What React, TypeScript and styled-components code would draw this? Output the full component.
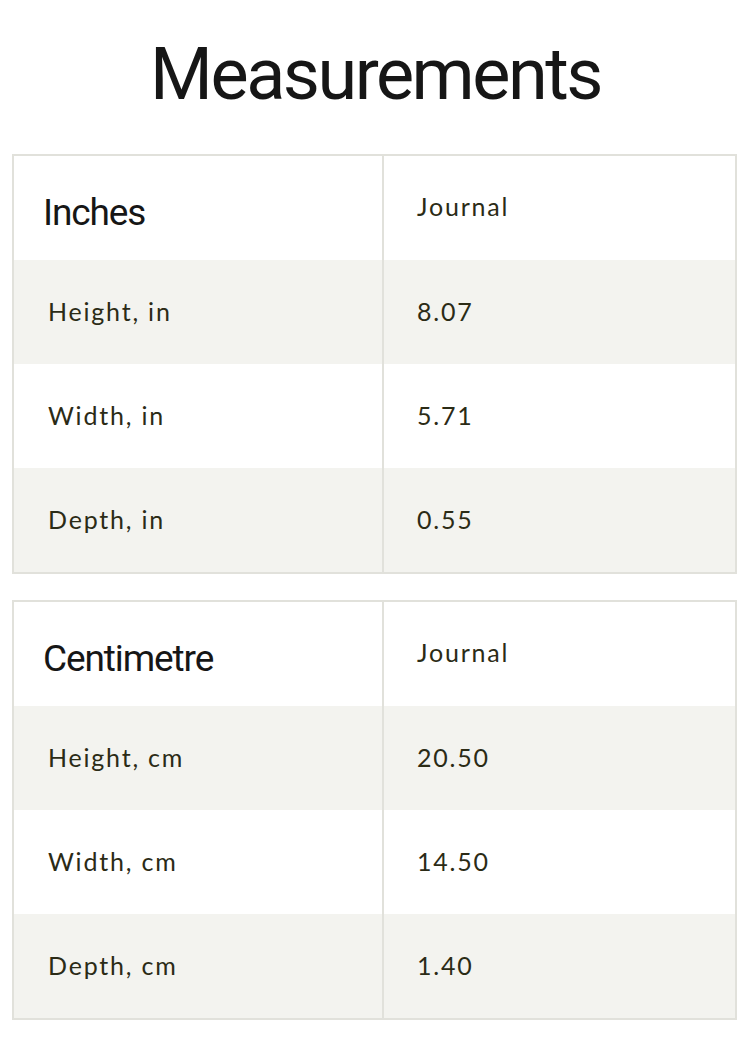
import React from "react";
import styled, { createGlobalStyle } from "styled-components";

const GlobalStyle = createGlobalStyle`
  html, body {
    margin: 0;
    padding: 0;
    background: #ffffff;
  }
  body {
    font-family: "Lato", "Liberation Sans", sans-serif;
  }
  * { box-sizing: border-box; }
`;

const Page = styled.div`
  width: 756px;
  height: 1040px;
  padding: 39px 19px 0 12px;
  display: flex;
  flex-direction: column;
  overflow: hidden;
`;

const Title = styled.h1`
  margin: 0 0 43px;
  font-family: "Roboto", "Liberation Sans", sans-serif;
  font-weight: 400;
  font-size: 72px;
  line-height: 72px;
  letter-spacing: -2.5px;
  color: #161616;
  text-align: center;
  padding-left: 2px;
`;

const Tables = styled.div`
  display: flex;
  flex-direction: column;
  gap: 26px;
`;

const Table = styled.div`
  display: grid;
  grid-template-columns: 370px 1fr;
  border: 2px solid #e1e1db;
  width: 725px;
`;

const Cell = styled.div<{ $shade: boolean; $left: boolean }>`
  height: 104px;
  display: flex;
  align-items: center;
  padding-left: ${(p) => (p.$left ? "34px" : "33px")};
  padding-bottom: 2px;
  background: ${(p) => (p.$shade ? "#f3f3ef" : "#ffffff")};
  border-right: ${(p) => (p.$left ? "2px solid #e1e1db" : "none")};
  font-family: "Lato", "Liberation Sans", sans-serif;
  font-size: 25px;
  letter-spacing: 1.8px;
  color: #2b2b16;
`;

const HeadCell = styled(Cell)`
  padding-top: 9px;
  padding-bottom: 0;
  padding-left: 29px;
  font-family: "Roboto", "Liberation Sans", sans-serif;
  font-size: 37px;
  letter-spacing: -1.1px;
  color: #161616;
`;

const ProductCell = styled(Cell)`
  padding-bottom: 4px;
`;

type Spec = { unit: string; rows: [string, string][] };

const specs: Spec[] = [
  {
    unit: "Inches",
    rows: [
      ["Height, in", "8.07"],
      ["Width, in", "5.71"],
      ["Depth, in", "0.55"],
    ],
  },
  {
    unit: "Centimetre",
    rows: [
      ["Height, cm", "20.50"],
      ["Width, cm", "14.50"],
      ["Depth, cm", "1.40"],
    ],
  },
];

export default function App() {
  return (
    <>
      <GlobalStyle />
      <Page>
        <Title>Measurements</Title>
        <Tables>
          {specs.map((s) => (
            <Table key={s.unit}>
              <HeadCell $shade={false} $left={true}>
                {s.unit}
              </HeadCell>
              <ProductCell $shade={false} $left={false}>
                Journal
              </ProductCell>
              {s.rows.map(([label, value], i) => (
                <React.Fragment key={label}>
                  <Cell $shade={i % 2 === 0} $left={true}>
                    {label}
                  </Cell>
                  <Cell $shade={i % 2 === 0} $left={false}>
                    {value}
                  </Cell>
                </React.Fragment>
              ))}
            </Table>
          ))}
        </Tables>
      </Page>
    </>
  );
}
